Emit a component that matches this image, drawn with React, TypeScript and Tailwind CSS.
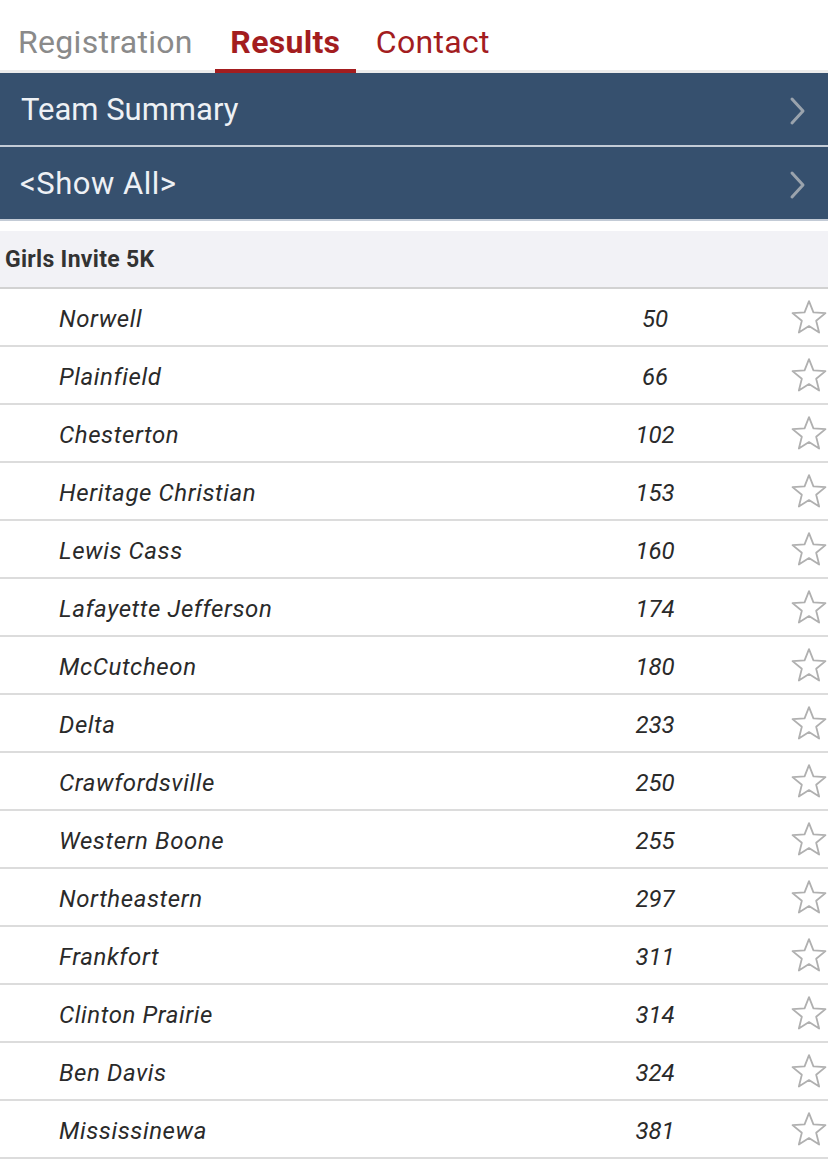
import React from "react";

const rows: [string, string][] = [
  ["Norwell", "50"],
  ["Plainfield", "66"],
  ["Chesterton", "102"],
  ["Heritage Christian", "153"],
  ["Lewis Cass", "160"],
  ["Lafayette Jefferson", "174"],
  ["McCutcheon", "180"],
  ["Delta", "233"],
  ["Crawfordsville", "250"],
  ["Western Boone", "255"],
  ["Northeastern", "297"],
  ["Frankfort", "311"],
  ["Clinton Prairie", "314"],
  ["Ben Davis", "324"],
  ["Mississinewa", "381"],
];

function Chevron() {
  return (
    <svg width="20" height="30" viewBox="0 0 20 30" fill="none">
      <path d="M4 3 L15 15 L4 27" stroke="#9aa3ad" strokeWidth="3" strokeLinecap="round" strokeLinejoin="round" />
    </svg>
  );
}

function Star() {
  return (
    <svg width="38" height="36" viewBox="0 0 36 34" fill="none">
      <path
        d="M18 2 L22.2 12.6 L33.6 13.3 L24.8 20.6 L27.6 31.7 L18 25.6 L8.4 31.7 L11.2 20.6 L2.4 13.3 L13.8 12.6 Z"
        stroke="#b0b0b0"
        strokeWidth="1.7"
        strokeLinejoin="round"
      />
    </svg>
  );
}

export default function App() {
  return (
    <div className="w-[828px] bg-white" style={{ fontFamily: "Roboto, 'Liberation Sans', sans-serif" }}>
      {/* Tabs */}
      <div className="flex h-[73px] items-end border-b-[3px] border-[#ebebeb]">
        <div className="ml-[18px] flex h-[70px] items-center pt-[14px] text-[32px] text-[#8a8a8a] tracking-[0.3px]">Registration</div>
        <div className="ml-[22px] -mb-[3px] flex h-[73px] w-[141px] items-center justify-center border-b-[4px] border-[#a31d1f] pt-[14px] text-[32px] font-bold text-[#a31d1f] tracking-[0.3px]">
          Results
        </div>
        <div className="ml-[20px] flex h-[70px] items-center pt-[14px] text-[32px] text-[#a31d1f] tracking-[0.3px]">Contact</div>
      </div>

      {/* Blue bars */}
      <div className="flex h-[72px] items-center justify-between bg-[#36506e] pl-[21px] pr-[20px] pt-[3px] text-[31px] text-[#eef1f5]">
        <span>Team Summary</span>
        <Chevron />
      </div>
      <div className="h-[2px] bg-[#c3cbd6]" />
      <div className="flex h-[72px] items-center justify-between bg-[#36506e] pl-[20px] pr-[20px] pt-[3px] text-[31px] text-[#eef1f5]">
        <span className="tracking-[0.5px]">&lt;Show All&gt;</span>
        <Chevron />
      </div>
      <div className="h-[2px] bg-[#c3cbd6]" />

      <div className="h-[10px] bg-white" />

      {/* Section header */}
      <div className="flex h-[58px] items-center border-b-[2px] border-[#d2d2d2] bg-[#f2f2f6] pl-[5px] pt-[3px] text-[23px] font-bold tracking-[0.3px] text-[#333]">
        Girls Invite 5K
      </div>

      {rows.map(([name, score]) => (
        <div key={name} className="flex h-[58px] items-center border-b-[2px] border-[#dcdcdc] text-[24px] italic text-[#2a2a2a]">
          <div className="w-[590px] pl-[59px] pt-[3px] tracking-[0.6px]">{name}</div>
          <div className="w-[130px] pt-[3px] text-center">{score}</div>
          <div className="flex flex-1 justify-end">
            <Star />
          </div>
        </div>
      ))}
    </div>
  );
}
